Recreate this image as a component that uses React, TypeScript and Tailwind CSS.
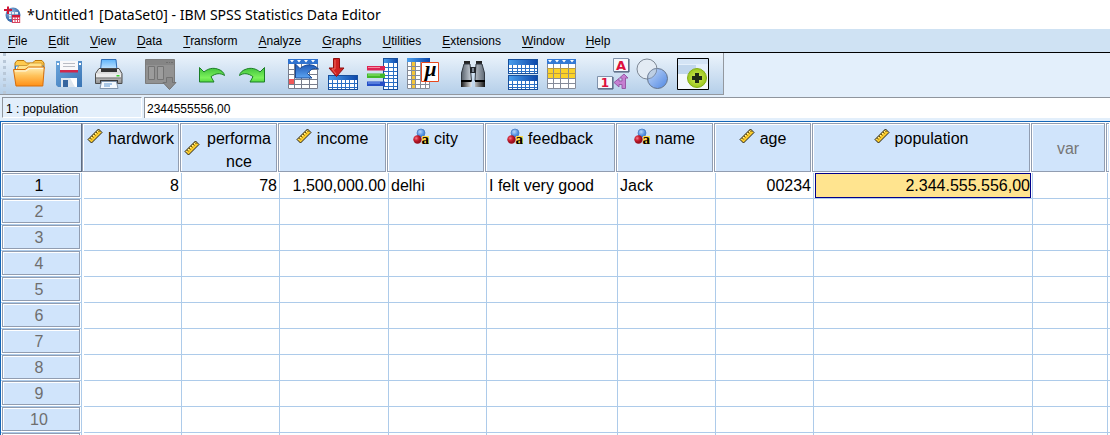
import React from "react";

type Measure = "scale" | "string";

interface Variable {
  name: string;
  measure: Measure;
  align: "left" | "right";
  width: string;
}

const variables: Variable[] = [
  { name: "hardwork", measure: "scale", align: "right", width: "w-[98px]" },
  { name: "performance", measure: "scale", align: "right", width: "w-[98px]" },
  { name: "income", measure: "scale", align: "right", width: "w-[109px]" },
  { name: "city", measure: "string", align: "left", width: "w-[98px]" },
  { name: "feedback", measure: "string", align: "left", width: "w-[131px]" },
  { name: "name", measure: "string", align: "left", width: "w-[98px]" },
  { name: "age", measure: "scale", align: "right", width: "w-[98px]" },
  { name: "population", measure: "scale", align: "right", width: "w-[219px]" },
];

const firstCase = ["8", "78", "1,500,000.00", "delhi", "I felt very good", "Jack", "00234", "2.344.555.556,00"];
const rowLabels = ["1", "2", "3", "4", "5", "6", "7", "8", "9", "10", ""];
const menus = ["File", "Edit", "View", "Data", "Transform", "Analyze", "Graphs", "Utilities", "Extensions", "Window", "Help"];

function Icon({ children }: { children: React.ReactNode }) {
  return (
    <svg viewBox="0 0 32 32" className="size-8 overflow-visible" aria-hidden="true">
      {children}
    </svg>
  );
}

/* A small data sheet: coloured top bar over a white grid. */
function Sheet({ x, y, w, h, head, cols, rows, line = "#2a6fc4" }: { x: number; y: number; w: number; h: number; head: number; cols: number; rows: number; line?: string }) {
  const cw = w / cols;
  const rh = (h - head) / rows;
  return (
    <g shapeRendering="crispEdges">
      <rect x={x} y={y} width={w} height={h} fill="#fff" />
      <rect x={x} y={y} width={w} height={head} fill="url(#sheetHead)" />
      {Array.from({ length: cols - 1 }, (_, i) => (
        <rect key={"c" + i} x={Math.round(x + cw * (i + 1))} y={y + head} width="1" height={h - head} fill={line} />
      ))}
      {Array.from({ length: rows - 1 }, (_, i) => (
        <rect key={"r" + i} x={x} y={Math.round(y + head + rh * (i + 1))} width={w} height="1" fill={line} />
      ))}
      <rect x={x + 0.5} y={y + 0.5} width={w - 1} height={h - 1} fill="none" stroke="#174f9c" />
    </g>
  );
}

function Gradients() {
  return (
    <svg className="absolute size-0" aria-hidden="true">
      <defs>
        <linearGradient id="sheetHead"><stop offset="0" stopColor="#4ba0ee" /><stop offset="1" stopColor="#0b45a8" /></linearGradient>
        <linearGradient id="folder" x2="0" y2="1"><stop offset="0" stopColor="#fff0b8" /><stop offset=".45" stopColor="#ffc35c" /><stop offset="1" stopColor="#ff8f16" /></linearGradient>
        <linearGradient id="disk" x2="1" y2="1"><stop offset="0" stopColor="#6aa5dc" /><stop offset="1" stopColor="#3a74b4" /></linearGradient>
        <linearGradient id="paper" x2="0" y2="1"><stop offset="0" stopColor="#5fb4fa" /><stop offset="1" stopColor="#d3ecff" /></linearGradient>
        <linearGradient id="printer" x2="0" y2="1"><stop offset="0" stopColor="#f4f4f4" /><stop offset="1" stopColor="#909090" /></linearGradient>
        <linearGradient id="green" x2="0" y2="1"><stop offset="0" stopColor="#3ec03b" /><stop offset=".7" stopColor="#7cf25c" /><stop offset="1" stopColor="#54d93e" /></linearGradient>
        <linearGradient id="blueArrow" x2="0" y2="1"><stop offset="0" stopColor="#1c55b4" /><stop offset="1" stopColor="#5da5f2" /></linearGradient>
        <linearGradient id="barrel"><stop offset="0" stopColor="#58616c" /><stop offset=".45" stopColor="#d2d9e1" /><stop offset="1" stopColor="#606a76" /></linearGradient>
        <linearGradient id="base"><stop offset="0" stopColor="#111" /><stop offset=".45" stopColor="#eee" /><stop offset="1" stopColor="#111" /></linearGradient>
        <linearGradient id="ringBlue" x2="1" y2="1"><stop offset="0" stopColor="#c5dafa" /><stop offset="1" stopColor="#4f87e2" /></linearGradient>
        <radialGradient id="lime"><stop offset="0" stopColor="#d9ec61" /><stop offset="1" stopColor="#9bc81d" /></radialGradient>
        <radialGradient id="redBall" cx=".35" cy=".35"><stop offset="0" stopColor="#f08090" /><stop offset=".5" stopColor="#d12436" /><stop offset="1" stopColor="#9c101e" /></radialGradient>
        <radialGradient id="blueBall" cx=".4" cy=".35"><stop offset="0" stopColor="#b8d8fb" /><stop offset="1" stopColor="#4b8ade" /></radialGradient>
        <radialGradient id="globe" cx=".4" cy=".35"><stop offset="0" stopColor="#a6c4e6" /><stop offset="1" stopColor="#3d70ae" /></radialGradient>
      </defs>
    </svg>
  );
}

function OpenIcon() {
  return (
    <Icon>
      <path d="M2 9V5l2-2.500h7L13.500 5h6L22 2.500h7L31 5v6H2z" fill="#ffca4f" stroke="#bd790c" />
      <path d="M2.500 8h28v8h-28z" fill="#fff" stroke="#267bc9" />
      <path d="M4 11l2-3.500h8l3-2.500h12V12H4z" fill="#ffe28c" stroke="#cf8b18" strokeWidth=".7" />
      <path d="M.5 11.500h11.500l3.500-2.500h15.800l-1.500 19H3z" fill="url(#folder)" stroke="#d76e0b" />
      <path d="M2 13h11l3.500-2.500H30" stroke="#fff8df" fill="none" />
    </Icon>
  );
}

function SaveIcon() {
  return (
    <Icon>
      <path d="M3 3h26v26H5l-2-2z" fill="url(#disk)" />
      <path d="M7 3h18v11H7z" fill="#f8f8fa" />
      <path d="M10 5.500h12M10 8.500h12" stroke="#b9bcc4" />
      <path d="M7 12h18v2.500H7z" fill="#d0284d" />
      <path d="M8 20h16v9H8z" fill="#dfe6ee" />
      <path d="M10 22h5v7h-5z" fill="#36659f" />
      <path d="M17 20l5 9h2v-9z" fill="#fff" />
      <path d="M4 5h2v2H4zM26 5h2v2h-2z" fill="#fff" />
    </Icon>
  );
}

function PrintIcon() {
  return (
    <Icon>
      <path d="M8.500 1.500H23l1 11H7.500z" fill="url(#paper)" stroke="#2f6db5" />
      <path d="M6 10.500h20l3 5v10H2.500v-10z" fill="url(#printer)" stroke="#4d4d4d" />
      <path d="M8 11h16v3H8z" fill="#333" />
      <path d="M3 15.500h25v4H3z" fill="#ececec" />
      <path d="M3 20h25" stroke="#777" />
      <path d="M23.500 17h3v1.500h-3z" fill="#35d427" />
      <path d="M7 22h18v3H7z" fill="#3a3a3a" />
      <path d="M8.500 23.500h15l1.500 7H7z" fill="#f4f9fe" stroke="#8296ad" />
      <path d="M11 26h8M11 28h6" stroke="#5f96cf" />
    </Icon>
  );
}

function RecallIcon() {
  return (
    <Icon>
      <path d="M1.500 1.500h29v24h-29z" fill="#929292" stroke="#7b7b7b" />
      <path d="M2 2h28v5H2z" fill="#858585" />
      <path d="M22 4.500h2M25 4.500h1M27 4.500h2" stroke="#6f6f6f" />
      <path d="M4.500 8.500h6v13h-6zM13.500 8.500h6v13h-6z" fill="#9c9c9c" stroke="#747474" />
      <path d="M22.500 19.500h6v5h3.500l-6.500 7-6.500-7h3.500z" fill="#8b8b8b" stroke="#737373" />
    </Icon>
  );
}

function CurvedArrow() {
  return <path d="M4.500 9.500l4.500 4.500C13 10.500 18 9.500 22.500 11c4 1.200 6.500 3.500 7 6.500-4-2.800-9-2.300-13.500 1.200l3 5.300H4.500z" fill="url(#green)" stroke="#1b7f26" strokeLinejoin="round" />;
}

function GoToCaseIcon() {
  return (
    <Icon>
      <path d="M2 1h30v30H2z" fill="#fff" />
      <path d="M2 1h30v5H2z" fill="#2f72cf" />
      <path d="M4 2h4l-2 2.500zM11 2h4l-2 2.500zM18 2h4l-2 2.500zM25 2h4l-2 2.500z" fill="#fff" />
      <path d="M2.500 6v24.500h29V6M8.500 6v24M15.500 6v24M23.500 6v24M2 11.500h29M2 16.500h29M2 21.500h29M2 26.500h29" fill="none" stroke="#777d8d" />
      <path d="M3 21h5v5H3z" fill="#f25757" />
      <path d="M9.500 6l4.500 4.500C19 6 27 5 32.500 11c-4-1.500-8 0-11 4.500l4.500 4.500H9.500z" fill="url(#blueArrow)" stroke="#184a98" />
    </Icon>
  );
}

function GoToVariableIcon() {
  return (
    <Icon>
      <Sheet x={2} y={17} w={30} h={15} head={5} cols={7} rows={3} />
      <path d="M7.500.5h6v9.500h4.500l-7.500 8.500L3 10h4.500z" fill="#cf2222" stroke="#8f1010" />
      <path d="M9 2v9H6l4 5" stroke="#ef6a5c" fill="none" />
    </Icon>
  );
}

function VariablesIcon() {
  return (
    <Icon>
      <Sheet x={17} y={0} w={15} h={32} head={5} cols={3} rows={7} />
      <path d="M1 8h18v4.500H1z" fill="#dc2453" /><path d="M2 9.500h12" stroke="#f48ca0" />
      <path d="M1 15.500h18V20H1z" fill="#42b92a" /><path d="M2 17h12" stroke="#9aea7c" />
      <path d="M1 23.500h18V28H1z" fill="#254fc6" /><path d="M2 25h12" stroke="#86abf4" />
    </Icon>
  );
}

function StatisticsIcon() {
  return (
    <Icon>
      <path d="M1 0h23v31H1z" fill="#fff" />
      <path d="M1 0h23v4H1z" fill="url(#sheetHead)" />
      <path d="M5 4h4v27H5z" fill="#f4c63a" />
      <path d="M1.500 4v26.500h22V4M5.500 4v27M9.500 4v27M14.500 4v27M19.500 4v27M1 8.500h23M1 12.500h23M1 17.500h23M1 21.500h23M1 26.500h23" fill="none" stroke="#858c98" />
      <path d="M15.500 4.500h17v19h-17z" fill="#fff" stroke="#e7481d" />
      <text x="18.500" y="18" fontFamily="Liberation Serif, serif" fontStyle="italic" fontWeight="700" fontSize="21">µ</text>
    </Icon>
  );
}

function FindIcon() {
  return (
    <Icon>
      <path d="M8 3h6v4H8zM20 3h6v4h-6z" fill="#222" />
      <path d="M8 6h6l1.500 17H5.500V15zM20 6h6l2.500 9v8H19z" fill="url(#barrel)" stroke="#343b44" />
      <path d="M14 9h6v6h-6z" fill="#20242b" />
      <path d="M16 10h2v4h-2z" fill="#7d8793" />
      <path d="M5 23h10.500v6H5zM19 23h10v6H19z" fill="url(#base)" />
      <path d="M5 23h10.500M19 23h10" stroke="#000" strokeWidth="2" />
    </Icon>
  );
}

function SplitIcon() {
  return (
    <Icon>
      <Sheet x={2} y={1} w={30} h={15} head={6} cols={7} rows={3} />
      <Sheet x={2} y={17} w={30} h={15} head={6} cols={7} rows={3} />
    </Icon>
  );
}

function SelectCasesIcon() {
  return (
    <Icon>
      <path d="M1 1h29v30H1z" fill="#fff" />
      <path d="M1 1h29v5H1z" fill="#3479d5" />
      <path d="M2 2h4L4 4.500zM9 2h4l-2 2.500zM16 2h4l-2 2.500zM24 2h4l-2 2.500z" fill="#fff" />
      <path d="M1 11h29v9H1z" fill="#fbd228" />
      <path d="M1.500 6v24.500h28V6M7.500 6v24M14.500 6v24M22.500 6v24M1 20.500h29M1 25.500h29" fill="none" stroke="#858b99" />
      <path d="M1 10.500h29M1 15.500h29" stroke="#ba9b43" />
    </Icon>
  );
}

function ValueLabelsIcon() {
  return (
    <Icon>
      <path d="M17.500.5h15v13h-15zM1.500 18.500h15v12h-15z" fill="#f6f8fc" stroke="#8193ac" />
      <path d="M18 14h15V1M2 31h15V19" stroke="#42536c" fill="none" />
      <text x="25" y="12" textAnchor="middle" fontFamily="DejaVu Sans, sans-serif" fontWeight="700" fontSize="13" fill="#dd103c">A</text>
      <text x="9" y="29" textAnchor="middle" fontFamily="DejaVu Sans, sans-serif" fontWeight="700" fontSize="12" fill="#dd103c">1</text>
      <path d="M28 16l4 4h-2.500v10.500H26v-4h-3V29l-5-4.500 5-4v2.500h3v-3h-2.500z" fill="#c67fd2" stroke="#965aa6" />
    </Icon>
  );
}

function SetsIcon() {
  return (
    <Icon>
      <circle cx="11" cy="11" r="10" fill="#e3ebf4" stroke="#7d8794" />
      <circle cx="21.500" cy="20.500" r="10" fill="url(#ringBlue)" stroke="#65758c" />
      <path d="M12 17.300A10 10 0 0 1 20.800 10.500 10 10 0 0 1 12 20.900 10 10 0 0 1 12 17.300z" fill="#bdcfe4" stroke="#71829b" strokeWidth=".8" />
    </Icon>
  );
}

function ShowAllIcon() {
  return (
    <Icon>
      <path d="M1.500.5h31v31h-31z" fill="#e5f0fb" stroke="#000" />
      <path d="M2 1h30v5H2z" fill="#d4e4f5" />
      <path d="M2 16h30v15H2z" fill="#f4f8fc" />
      <path d="M2 7h18v9H2z" fill="#c2d7ed" />
      <circle cx="21" cy="20" r="9.500" fill="url(#lime)" stroke="#86ae18" />
      <path d="M19 15h4v3h3v4h-3v3h-4v-3h-3v-4h3z" fill="#202b16" />
    </Icon>
  );
}

const toolGroups: { spacing: string; tools: { label: string; icon: React.ReactNode }[] }[] = [
  { spacing: "mr-[19px]", tools: [{ label: "Open", icon: <OpenIcon /> }, { label: "Save", icon: <SaveIcon /> }, { label: "Print", icon: <PrintIcon /> }] },
  { spacing: "mr-[19px]", tools: [{ label: "Recall dialogs", icon: <RecallIcon /> }] },
  {
    spacing: "mr-[19px]",
    tools: [
      { label: "Undo", icon: <Icon><CurvedArrow /></Icon> },
      { label: "Redo", icon: <Icon><g transform="translate(34 0) scale(-1 1)"><CurvedArrow /></g></Icon> },
    ],
  },
  {
    spacing: "mr-[18px]",
    tools: [
      { label: "Go to case", icon: <GoToCaseIcon /> },
      { label: "Go to variable", icon: <GoToVariableIcon /> },
      { label: "Variables", icon: <VariablesIcon /> },
      { label: "Descriptive statistics", icon: <StatisticsIcon /> },
    ],
  },
  { spacing: "mr-[18px]", tools: [{ label: "Find", icon: <FindIcon /> }] },
  { spacing: "mr-[18px]", tools: [{ label: "Split file", icon: <SplitIcon /> }, { label: "Select cases", icon: <SelectCasesIcon /> }] },
  { spacing: "mr-[15px]", tools: [{ label: "Value labels", icon: <ValueLabelsIcon /> }, { label: "Use sets", icon: <SetsIcon /> }, { label: "Show all", icon: <ShowAllIcon /> }] },
];

function AppIcon() {
  return (
    <svg viewBox="0 0 18 18" className="size-[18px] shrink-0" aria-hidden="true">
      <circle cx="9" cy="9" r="7.500" fill="url(#globe)" />
      <path d="M5 6h9v7H5z" fill="#e8f0f8" />
      <path d="M5 8.500h9M5 11h9M7.500 6v7M10.500 6v7" stroke="#6f91bb" strokeWidth=".8" />
      <path d="M4 .5v7.500M0 4h8" stroke="#d11837" strokeWidth="2" />
      <path d="M8 9h8v8H8z" fill="#fff" />
      <path d="M8 9h8v2.500H8z" fill="#d11837" />
      <path d="M8.500 11v6M11 11v6M13.500 11v6M15.700 11v6M8 13.500h8M8 16.500h8" stroke="#d94460" strokeWidth="1" />
    </svg>
  );
}

function MeasureIcon({ measure }: { measure: Measure }) {
  if (measure === "scale") {
    return (
      <svg viewBox="0 0 16 16" className="size-4 shrink-0" aria-hidden="true">
        <path d="M1 11.500L11.500 1 15 4.500 4.500 15z" fill="#fbcb2c" stroke="#20201c" strokeWidth="1" />
        <path d="M2.500 11.500l9-9" stroke="#fff3a8" strokeWidth="1" />
        <path d="M5 8l1.500 1.500M7 6l1.500 1.500M9 4l1.500 1.500M3.200 10l1.500 1.500M11 2.500L12.500 4" stroke="#4a3a0a" strokeWidth=".9" />
      </svg>
    );
  }
  return (
    <svg viewBox="0 0 16 16" className="size-4 shrink-0 overflow-visible" aria-hidden="true">
      <circle cx="8" cy="5" r="4" fill="url(#blueBall)" stroke="#4478bd" strokeWidth=".7" />
      <circle cx="4.500" cy="11.500" r="4.200" fill="url(#redBall)" />
      <path d="M9 8h7v8H9z" fill="#ffd84b" />
      <text x="8.500" y="15.500" fontFamily="Liberation Serif, serif" fontWeight="700" fontSize="15" fill="#000">a</text>
    </svg>
  );
}

const headerBox = "flex h-[49px] mr-px border border-[#919db1] bg-[#d0e4fb] shadow-[inset_1px_1px_0_#fff]";

function DataCell({ variable, value, selected, first }: { variable: Variable; value: string; selected: boolean; first: boolean }) {
  const align = variable.align === "right" ? "pr-px text-right" : "pl-0.5 text-left";
  if (first) {
    return (
      <td className="p-0 pl-0.5">
        <div className={`h-[26px] border-b border-[#adcbea] pt-px whitespace-nowrap ${align}`}>{value}</div>
      </td>
    );
  }
  return (
    <td className="border-b border-[#adcbea] p-0 pl-px">
      {selected ? (
        <div className="h-[25px] border-l border-[#adcbea] pl-px">
          <div className="h-[25px] border border-[#00008b] bg-[#ffe48f] text-right whitespace-nowrap">{value}</div>
        </div>
      ) : (
        <div className={`h-[25px] border-l border-[#adcbea] pt-px whitespace-nowrap ${align}`}>{value}</div>
      )}
    </td>
  );
}

export default function App() {
  return (
    <div className="flex h-screen flex-col overflow-hidden bg-[#e3effb] font-['Liberation_Sans',Arial,sans-serif] text-black">
      <Gradients />
      <header className="flex h-[29px] shrink-0 items-center gap-[5px] bg-white pl-1">
        <AppIcon />
        <h1 className="font-['Noto_Sans','Open_Sans',sans-serif] text-sm whitespace-nowrap">*Untitled1 [DataSet0] - IBM SPSS Statistics Data Editor</h1>
      </header>

      <nav className="flex h-6 shrink-0 items-center gap-[21px] border-b border-black bg-[#cfe2f3] pl-2 text-xs" aria-label="Main menu">
        {menus.map((menu) => (
          <button key={menu} type="button">
            <span className="underline underline-offset-2">{menu[0]}</span>
            {menu.slice(1)}
          </button>
        ))}
      </nav>

      <div className="flex h-[42px] shrink-0">
        <div className="flex items-center border-r border-b border-[#93989f] bg-linear-to-b from-[#ecf4fc] to-[#b5cfe9]" role="toolbar" aria-label="Data editor tools">
          <div className="mr-1.5 ml-[3px] h-full w-1 border-l-3 border-dotted border-[#b9c8d8]" />
          {toolGroups.map((group, index) => (
            <div key={index} className={`flex gap-2 ${group.spacing}`}>
              {group.tools.map((tool) => (
                <button key={tool.label} type="button" aria-label={tool.label}>{tool.icon}</button>
              ))}
            </div>
          ))}
        </div>
      </div>

      <div className="flex h-[26px] shrink-0 gap-0.5 pt-0.5 pb-[3px] pl-0.5 text-xs">
        <label htmlFor="cell-value" className="flex w-[140px] items-center border border-r-white border-b-white border-[#8f959d] pt-0.5 pl-[3px]">1 : population</label>
        <input id="cell-value" type="text" defaultValue="2344555556,00" className="min-w-0 flex-1 border-t border-l border-[#8f959d] bg-white pt-0.5 pl-0.5 outline-none" />
      </div>

      <main className="min-h-0 flex-1 overflow-hidden border-t border-l border-[#1366b8] bg-white">
        <table className="w-full table-fixed border-separate border-spacing-0 text-base leading-[23px]">
          <colgroup>
            <col className="w-[81px]" />
            {variables.map((variable) => <col key={variable.name} className={variable.width} />)}
            <col className="w-[75px]" />
            <col />
          </colgroup>
          <thead>
            <tr className="h-[51px]">
              <td className="p-0 pl-px"><div className="h-[49px] border border-t-[#919db1] border-r-[#5f6c80] border-b-[#5f6c80] border-l-[#919db1] bg-[#d0e4fb] shadow-[inset_1px_1px_0_#fff]" /></td>
              {variables.map((variable) => (
                <th key={variable.name} scope="col" className="p-0 font-normal">
                  <div className={`${headerBox} items-start justify-center px-[3px] pt-[3px]`}>
                    <div className="flex items-center gap-[5px]">
                      <span className="pb-[5px]"><MeasureIcon measure={variable.measure} /></span>
                      <span className="min-w-0 break-all">{variable.name}</span>
                    </div>
                  </div>
                </th>
              ))}
              <th scope="col" className="p-0 font-normal text-[#767676]"><div className={`${headerBox} items-center justify-center pt-0.5`}>var</div></th>
              <td className="p-0"><div className={`${headerBox} border-r-0`} /></td>
            </tr>
          </thead>
          <tbody>
            {rowLabels.map((label, row) => (
              <tr key={row} className="h-[26px]">
                <th scope="row" className="border-r border-b border-[#adcbea] p-0 pr-px pl-px font-normal">
                  <div className={`mb-px h-6 border border-[#919db1] bg-[#d0e4fb] pr-1 shadow-[inset_1px_1px_0_#fff] ${row === 0 ? "text-black" : "text-[#6e6e6e]"}`}>{label}</div>
                </th>
                {variables.map((variable, index) => (
                  <DataCell
                    key={variable.name}
                    variable={variable}
                    value={row === 0 ? firstCase[index] : ""}
                    selected={row === 0 && variable.name === "population"}
                    first={index === 0}
                  />
                ))}
                <td className="border-b border-[#adcbea] p-0 pl-px"><div className="h-[25px] border-l border-[#adcbea]" /></td>
                <td className="border-b border-[#adcbea] p-0 pl-px"><div className="h-[25px] border-l border-[#adcbea]" /></td>
              </tr>
            ))}
          </tbody>
        </table>
      </main>
    </div>
  );
}
